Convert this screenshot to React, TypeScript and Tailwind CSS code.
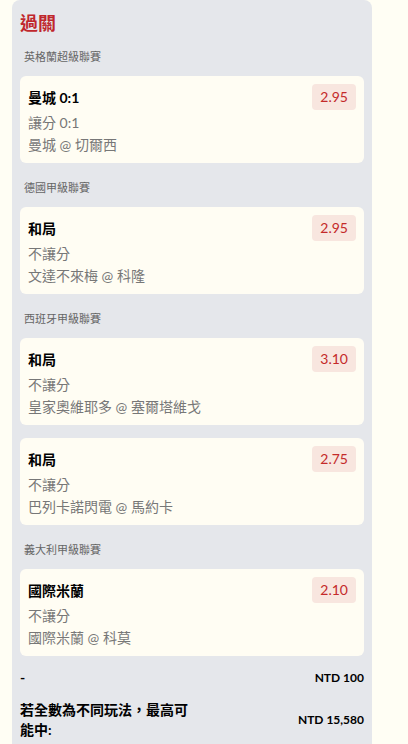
import React from 'react';

type Leg = { pick: string; market: string; match: string; odds: string };
type Group = { league: string; legs: Leg[] };

const groups: Group[] = [
  {
    league: '英格蘭超級聯賽',
    legs: [{ pick: '曼城 0:1', market: '讓分 0:1', match: '曼城 @ 切爾西', odds: '2.95' }],
  },
  {
    league: '德國甲級聯賽',
    legs: [{ pick: '和局', market: '不讓分', match: '文達不來梅 @ 科隆', odds: '2.95' }],
  },
  {
    league: '西班牙甲級聯賽',
    legs: [
      { pick: '和局', market: '不讓分', match: '皇家奧維耶多 @ 塞爾塔維戈', odds: '3.10' },
      { pick: '和局', market: '不讓分', match: '巴列卡諾閃電 @ 馬約卡', odds: '2.75' },
    ],
  },
  {
    league: '義大利甲級聯賽',
    legs: [{ pick: '國際米蘭', market: '不讓分', match: '國際米蘭 @ 科莫', odds: '2.10' }],
  },
];

function LegCard({ leg }: { leg: Leg }) {
  return (
    <div className="bg-[#fffdf3] rounded-md px-2 pt-2 pb-[7px]">
      <div className="flex items-start justify-between">
        <div className="text-[14px] leading-[28px] font-bold text-black">{leg.pick}</div>
        <div className="bg-[#f8e6df] text-[#c42a2a] text-[14px] leading-[18px] py-1 px-2 rounded">
          {leg.odds}
        </div>
      </div>
      <div className="text-[14px] leading-[22px] text-[#777777]">{leg.market}</div>
      <div className="text-[14px] leading-[22px] text-[#777777]">{leg.match}</div>
    </div>
  );
}

export default function App() {
  return (
    <div
      className="min-h-screen bg-[#fffef4] overflow-hidden"
      style={{ fontFamily: 'Lato, "Noto Sans CJK TC", sans-serif' }}
    >
      <div className="ml-3 w-[360px] min-h-[744px] bg-[#e5e7eb] rounded-t-lg px-2 pt-[9px] pb-4">
        <div className="text-[18px] leading-7 font-bold text-[#c0272d]">過關</div>

        {groups.map((g, gi) => (
          <div key={g.league} className={gi === 0 ? 'mt-[12px]' : 'mt-[17px]'}>
            <div className="px-1 text-[11px] leading-4 text-[#666666] mb-[11px]">{g.league}</div>
            <div className="flex flex-col gap-[13px]">
              {g.legs.map((leg, li) => (
                <LegCard key={li} leg={leg} />
              ))}
            </div>
          </div>
        ))}

        <div className="mt-3 flex items-center justify-between">
          <div className="text-[14px] leading-5 font-bold text-black">-</div>
          <div className="text-[12px] font-bold text-black">NTD 100</div>
        </div>
        <div className="mt-3 flex items-center justify-between">
          <div className="w-1/2 text-[14px] leading-5 font-bold text-black">若全數為不同玩法，最高可能中:</div>
          <div className="text-[12px] font-bold text-black">NTD 15,580</div>
        </div>
      </div>
    </div>
  );
}
